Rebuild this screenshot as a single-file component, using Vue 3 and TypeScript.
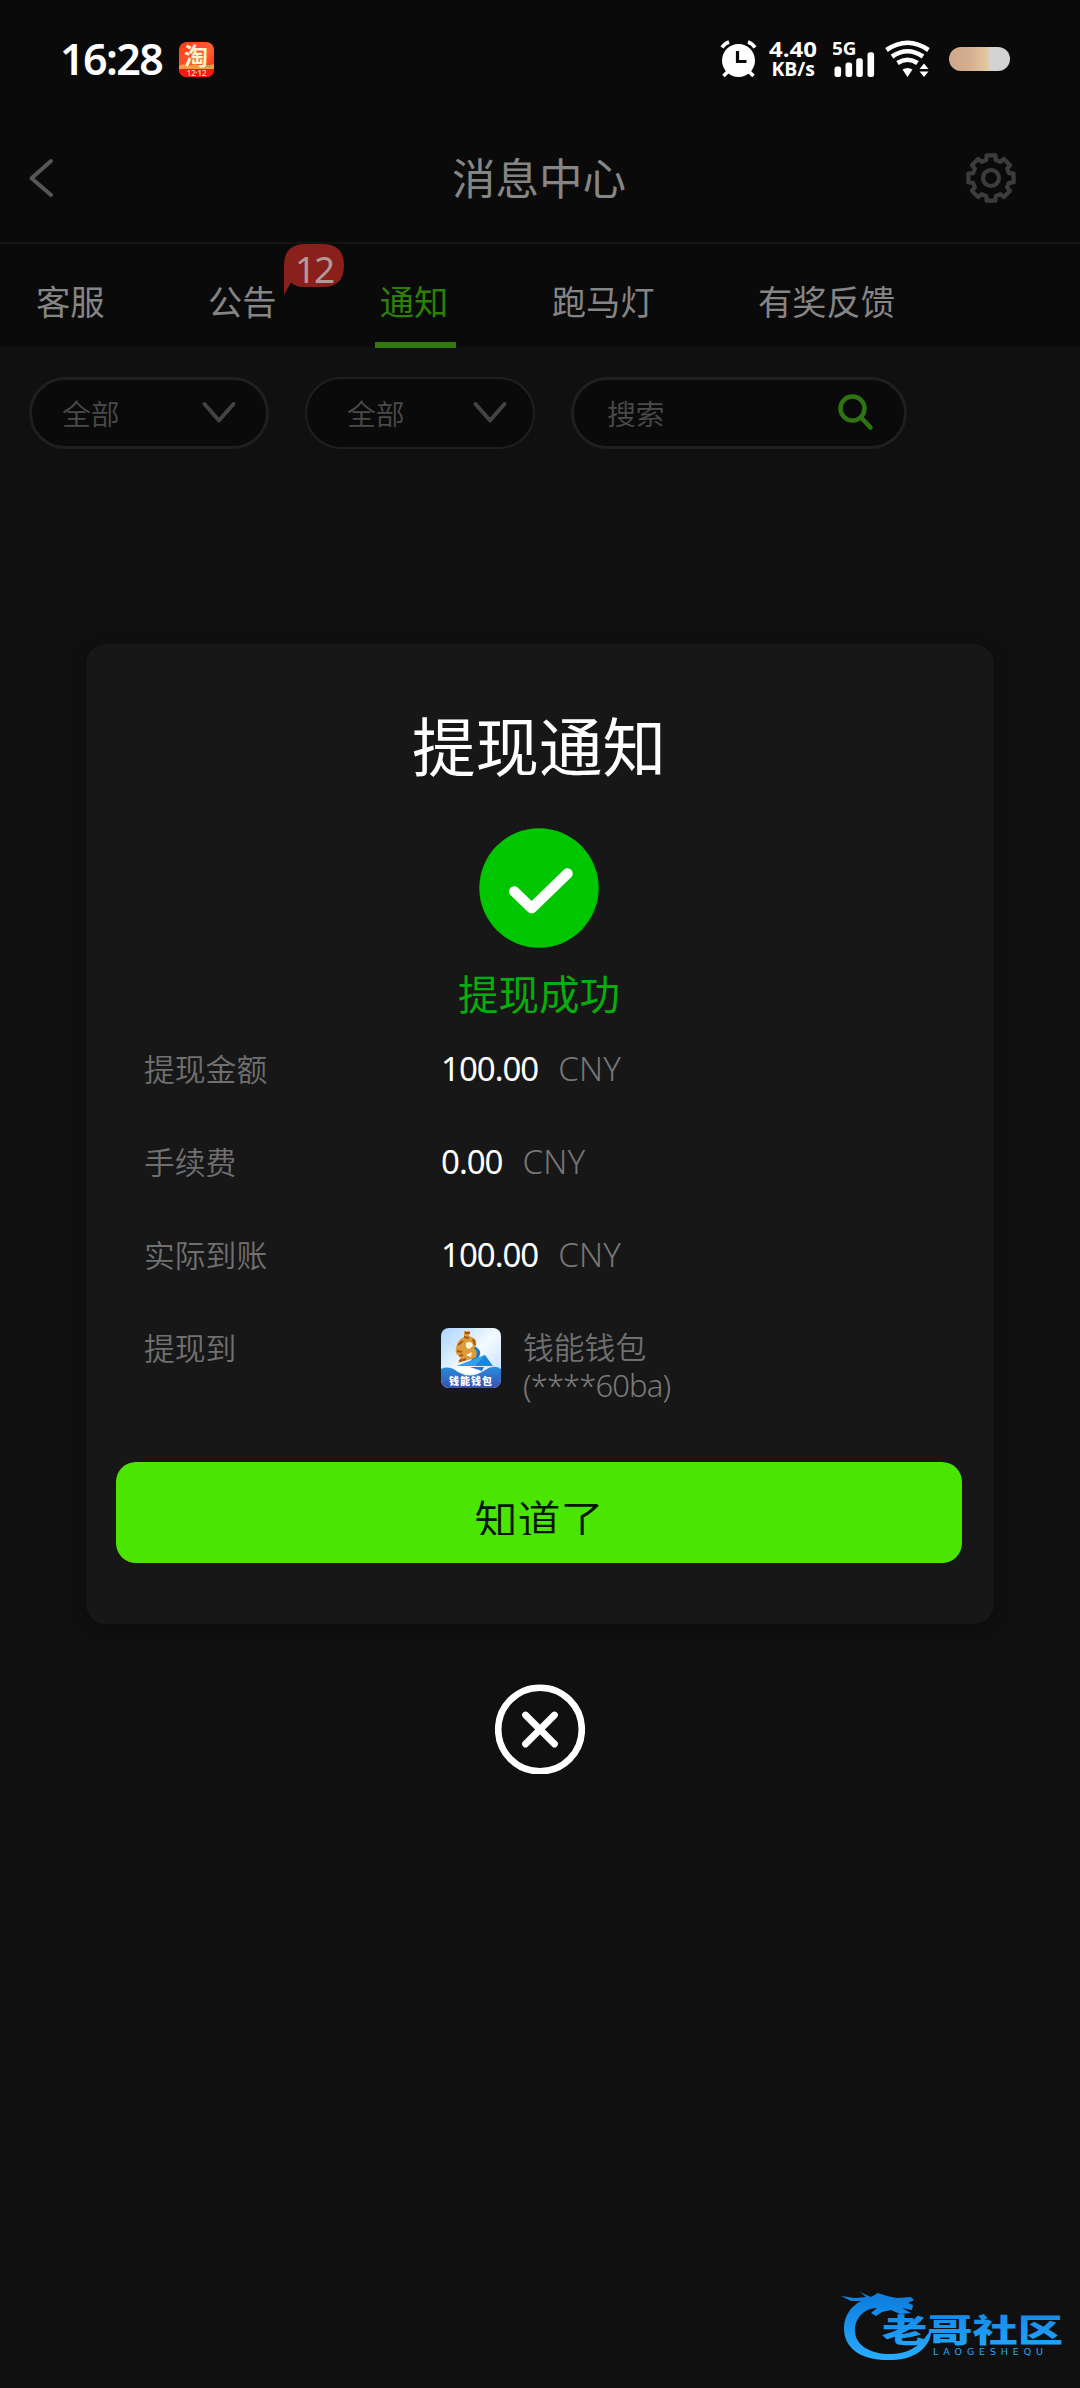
<script setup lang="ts">
interface Tab {
  label: string
  badge?: number
  active?: boolean
}

interface AmountRow {
  label: string
  value: string
}

const tabs: Tab[] = [
  { label: '客服' },
  { label: '公告', badge: 12 },
  { label: '通知', active: true },
  { label: '跑马灯' },
  { label: '有奖反馈' },
]

const rows: AmountRow[] = [
  { label: '提现金额', value: '100.00' },
  { label: '手续费', value: '0.00' },
  { label: '实际到账', value: '100.00' },
]

// Outline of an eight-toothed cog centred on the origin
function cogPath(): string {
  const steps: [number, number][] = [
    [-11, 23], [11, 23], [15, 18.6], [30, 18.6],
  ]
  const pts: string[] = []
  for (let i = 0; i < 8; i++) {
    for (const [deg, r] of steps) {
      const a = ((i * 45 + deg - 90) * Math.PI) / 180
      pts.push(`${(Math.cos(a) * r).toFixed(2)} ${(Math.sin(a) * r).toFixed(2)}`)
    }
  }
  return `M${pts.join('L')}Z`
}
const cog = cogPath()
</script>

<template>
  <div class="screen">
    <header class="top">
      <div class="status">
        <span class="clock">16:28</span>
        <svg class="app-icon" width="35" height="35" viewBox="0 0 35 35">
          <defs>
            <linearGradient id="tb" x1="0" y1="0" x2="1" y2="1">
              <stop offset="0" stop-color="#ff3a10" />
              <stop offset=".55" stop-color="#ff6030" />
              <stop offset="1" stop-color="#fb1c10" />
            </linearGradient>
          </defs>
          <rect width="35" height="35" rx="8" fill="url(#tb)" />
          <path d="M0 24Q4 20 8 25L16 22Q24 26 35 22V27H0Z" fill="#ff9a3c" />
          <path d="M20 24H33" stroke="#9fb060" stroke-width="2" />
          <path d="M0 27H35Q35 35 27 35H8Q0 35 0 27Z" fill="#f21a12" />
          <text x="5" y="22.500" font-size="24" font-weight="700" fill="#fff3d2" class="cjk-svg">淘</text>
          <text x="7.500" y="34" font-size="8.500" font-weight="600" fill="#ffc9a0" textLength="20" class="lat-svg">12·12</text>
        </svg>
        <div class="indicators">
          <svg width="38" height="38" viewBox="0 0 38 38">
            <circle cx="18.500" cy="20.500" r="16.500" fill="#fff" />
            <path d="M2 7.500Q4.500 3.500 9 2M28 2Q32.500 3.500 35 7.500" fill="none" stroke="#fff" stroke-width="3.600" />
            <path d="M7.500 32L3.500 36M29.500 32L33.500 36" stroke="#fff" stroke-width="3.600" />
            <path d="M17.500 11V21.500H26.500" fill="none" stroke="#0a0a0a" stroke-width="3.200" />
          </svg>
          <svg class="speed" width="50" height="38" viewBox="0 0 50 38">
            <text x="0" y="17" font-size="21.500" font-weight="700" textLength="48" lengthAdjust="spacingAndGlyphs" class="lat-svg">4.40</text>
            <text x="2.500" y="35.500" font-size="19" font-weight="700" textLength="43.500" lengthAdjust="spacingAndGlyphs" class="lat-svg">KB/s</text>
          </svg>
          <svg class="signal" width="43" height="38" viewBox="0 0 43 38" fill="#fff">
            <text x="-1" y="14.500" font-size="18.500" font-weight="700" textLength="24.500" lengthAdjust="spacingAndGlyphs" class="lat-svg">5G</text>
            <rect x="1.500" y="26.500" width="6.600" height="10.500" rx="2.500" />
            <rect x="12.500" y="22.500" width="6.600" height="14.500" rx="2.500" />
            <rect x="23.200" y="18.300" width="6.600" height="18.700" rx="2.500" />
            <rect x="34.500" y="12.300" width="6.600" height="24.700" rx="2.500" />
          </svg>
          <svg class="wifi" width="46" height="38" viewBox="0 0 46 38">
            <g fill="none" stroke="#fff" stroke-width="4.600">
              <path d="M1.500 10Q22.500 -4.500 43.500 10" />
              <path d="M7 16.500Q22.500 6 38 16.500" />
              <path d="M12.500 23Q22.500 16.500 32.500 23" />
            </g>
            <path d="M17.500 29.500Q22.500 26.500 27.500 29.500L22.500 37Z" fill="#fff" />
            <path d="M34.500 29L39 23.500L43.500 29ZM34.500 31.500H43.500L39 37Z" fill="#fff" />
          </svg>
          <i class="battery"></i>
        </div>
      </div>

      <div class="nav">
        <svg width="28" height="44" viewBox="0 0 28 44">
          <path d="M24 5L4.500 22.300L24 39" fill="none" stroke="#565656" stroke-width="4" stroke-linecap="round" stroke-linejoin="round" />
        </svg>
        <h1>消息中心</h1>
        <svg width="54" height="54" viewBox="-27 -27 54 54" fill="none" stroke="#3c3c3c" stroke-width="4.200" stroke-linejoin="round">
          <path :d="cog" />
          <circle r="8" />
        </svg>
      </div>

      <nav class="tabs">
        <div v-for="t in tabs" :key="t.label" class="tab" :class="{ active: t.active }">
          {{ t.label }}
          <span v-if="t.badge" class="badge">
            <svg width="60" height="51" viewBox="0 0 60 51">
              <path d="M0 21.500Q0 0 21.500 0H38.500Q60 0 60 21.500Q60 43 38.500 43H19Q12 43 7 38.500L0 51Z" fill="#89201c" />
            </svg>
            <b>{{ t.badge }}</b>
          </span>
        </div>
      </nav>
    </header>

    <section class="filters">
      <div class="pill first">
        <span>全部</span>
        <svg width="36" height="24" viewBox="0 0 36 24"><path d="M3.500 3L18 19.500L32.500 3" /></svg>
      </div>
      <div class="pill second">
        <span>全部</span>
        <svg width="36" height="24" viewBox="0 0 36 24"><path d="M3.500 3L18 19.500L32.500 3" /></svg>
      </div>
      <div class="pill search">
        <span>搜索</span>
        <svg width="38" height="38" viewBox="0 0 38 38" class="lens">
          <circle cx="15.500" cy="15.500" r="12" />
          <path d="M24 24.500L33.500 34.500" />
        </svg>
      </div>
    </section>

    <div class="overlay">
      <section class="dialog">
        <h2>提现通知</h2>
        <svg class="ok" width="120" height="120" viewBox="0 0 120 120">
          <circle cx="60" cy="60" r="59.700" fill="#00c600" />
          <path d="M35.300 63.500L52.700 80.300L88.500 45.500" fill="none" stroke="#fff" stroke-width="10.500" stroke-linecap="round" stroke-linejoin="round" />
        </svg>
        <p class="result">提现成功</p>

        <div v-for="r in rows" :key="r.label" class="row">
          <span class="label">{{ r.label }}</span>
          <span class="value">{{ r.value }}</span>
          <span class="unit">CNY</span>
        </div>

        <div class="row target">
          <span class="label">提现到</span>
          <svg class="wallet" width="60" height="60" viewBox="0 0 60 60">
            <defs>
              <linearGradient id="sky" x1="0" y1="0" x2="1" y2="1">
                <stop offset="0" stop-color="#a9d4ff" />
                <stop offset=".5" stop-color="#f4faff" />
                <stop offset="1" stop-color="#b7dbff" />
              </linearGradient>
              <linearGradient id="sea" x1="0" y1="0" x2="0" y2="1">
                <stop offset="0" stop-color="#278ddd" />
                <stop offset="1" stop-color="#3a51ae" />
              </linearGradient>
              <clipPath id="rr"><rect width="60" height="60" rx="8" /></clipPath>
            </defs>
            <g clip-path="url(#rr)">
              <rect width="60" height="60" fill="url(#sky)" />
              <path d="M33 18Q42 22 38 29L30 34Z" fill="#1479cf" />
              <path d="M44 27L52 38H16Z" fill="#1c86d6" />
              <path d="M16 38L44 27L34 38Z" fill="#2aa6e8" />
              <path d="M23 3L29 3L28 8Q37 10 35 18L33 20Q38 25 34 30L17 35L20 28Q13 27 15 20Q16 12 23 9Z" fill="#dc9c3c" />
              <path d="M24 5H29M23 9L28 10M17 17L22 13M16 23L21 24M32 11L34 17M18 33L25 31M18 28L22 27" stroke="#a8560f" stroke-width="2" />
              <path d="M25 15Q31 12 32 18L28 21Q24 20 25 15M25 27L31 24L30 29Z" fill="#fff7dc" />
              <path d="M0 41Q8 37 17 44Q30 52 44 42Q53 36 60 41V60H0Z" fill="url(#sea)" />
              <path d="M14 41Q30 37 45 41Q31 51 14 41Z" fill="#fff" />
              <path d="M29 39H43L41 43Z" fill="#1678d0" />
              <text x="8" y="57" font-size="10" font-weight="900" fill="#fff" textLength="43" class="cjk-svg">钱能钱包</text>
            </g>
          </svg>
          <div class="account">
            <div>钱能钱包</div>
            <div class="number">(****60ba)</div>
          </div>
        </div>

        <button class="confirm"><span>知道了</span></button>
      </section>

      <svg class="close" width="90" height="90" viewBox="0 0 90 90" fill="none" stroke="#fff">
        <circle cx="45" cy="45.500" r="41.800" stroke-width="6.600" />
        <path d="M30.500 31L59.500 60M59.500 31L30.500 60" stroke-width="6.800" stroke-linecap="round" />
      </svg>
    </div>

    <svg class="brand" width="230" height="100" viewBox="0 0 230 100">
      <defs>
        <linearGradient id="brand" gradientUnits="userSpaceOnUse" x1="0" y1="30" x2="0" y2="88">
          <stop offset="0" stop-color="#0f80e0" />
          <stop offset="1" stop-color="#28acff" />
        </linearGradient>
      </defs>
      <g fill="url(#brand)">
        <path d="M1 26L15 28L26 27L20 22L31 27L38 23L47 26L57 28L71 27L74 30L68 33L73 35L72 40L62 38L71 43L60 44L51 40L42 42L36 46L31 43L37 38C23 38 14 50 15 62C16 76 31 84 50 84C67 84 79 77 87 65L91 60C92 75 76 90 52 90C20 91 4 78 4 58C4 46 11 36 21 31L11 31Z" />
        <text x="42" y="71.500" font-size="32" font-weight="900" textLength="181" lengthAdjust="spacingAndGlyphs" class="cjk-svg">老哥社区</text>
        <text x="93" y="84.500" font-size="9.500" font-weight="400" textLength="110" class="wide-svg">LAOGESHEQU</text>
      </g>
    </svg>
  </div>
</template>

<style>
html,
body {
  margin: 0;
  background: #101010;
}
</style>

<style scoped>
.screen {
  position: relative;
  width: 1080px;
  height: 2388px;
  overflow: hidden;
  background: #101010;
  font-family: "Noto Sans CJK SC", sans-serif;
  white-space: nowrap;
}

svg {
  display: block;
  flex: none;
}

.cjk-svg {
  font-family: "Noto Sans CJK SC", sans-serif;
}

.lat-svg {
  font-family: "Open Sans", "Noto Sans", sans-serif;
}

.wide-svg {
  font-family: "DejaVu Sans", sans-serif;
}

.top {
  height: 347px;
  background: #0a0a0a;
}

.status {
  display: flex;
  align-items: center;
  height: 118px;
  padding: 0 70px 0 60px;
  box-sizing: border-box;
}

.clock {
  width: 119px;
  font: 600 43px/60px "Noto Sans", sans-serif;
  letter-spacing: -1.600px;
  color: #fff;
}

.indicators {
  display: flex;
  align-items: center;
  margin-left: auto;
}

.speed {
  margin-left: 11px;
  fill: #fff;
}

.signal {
  margin-left: 14px;
}

.wifi {
  margin-left: 9px;
}

.battery {
  width: 61px;
  height: 24px;
  margin-left: 18px;
  border-radius: 12px;
  background: linear-gradient(90deg, #cfa78c 0, #d4ae90 20px, #e6c79f 39px, #d3d3d3 40px);
}

.nav {
  display: flex;
  align-items: center;
  justify-content: space-between;
  height: 124px;
  padding: 0 62px 0 27px;
  border-bottom: 2px solid #131313;
}

.nav h1 {
  margin: -7px 0 0 59px;
  font-size: 43.500px;
  font-weight: 400;
  line-height: 60px;
  color: #858585;
}

.nav svg {
  margin-bottom: 4px;
}

.tabs {
  display: flex;
  gap: 103.300px;
  height: 103px;
  padding-left: 36px;
}

.tab {
  position: relative;
  font-size: 34.300px;
  line-height: 112px;
  color: #858585;
}

.tab.active {
  color: #2d7f08;
}

.tab.active::after {
  content: "";
  position: absolute;
  left: -5px;
  right: -8px;
  top: 98px;
  height: 6px;
  background: #2f7a0b;
}

.badge {
  position: absolute;
  left: 76px;
  top: 0;
  width: 60px;
  height: 51px;
}

.badge b {
  position: absolute;
  left: 0;
  top: 0;
  width: 60px;
  text-align: center;
  font: 400 37px/49px "Noto Sans", sans-serif;
  letter-spacing: -2px;
  color: #b29a99;
}

.filters {
  display: flex;
  padding: 30px 0 0 29px;
}

.pill {
  display: flex;
  align-items: center;
  justify-content: space-between;
  box-sizing: border-box;
  height: 72px;
  border: 3px solid #1f1f1f;
  border-radius: 36px;
  background: #0a0a0a;
  font-size: 28.800px;
  font-weight: 350;
  line-height: 60px;
  color: #4a4a4a;
}

.pill path {
  fill: none;
  stroke: #434343;
  stroke-width: 4;
  stroke-linecap: round;
  stroke-linejoin: round;
}

.first {
  width: 240px;
  padding: 0 29px 0 30px;
}

.second {
  width: 230px;
  margin-left: 36px;
  padding: 0 25px 0 40px;
  border-width: 2px;
}

.search {
  width: 336px;
  margin-left: 36px;
  padding: 0 29px 0 33px;
}

.search .lens {
  margin-bottom: 2px;
}

.search .lens circle,
.search .lens path {
  fill: none;
  stroke: #2f7413;
  stroke-width: 4.500;
}

.overlay {
  position: absolute;
  inset: 0;
  display: flex;
  flex-direction: column;
  align-items: center;
  padding-top: 644px;
}

.dialog {
  display: flex;
  flex-direction: column;
  align-items: center;
  box-sizing: border-box;
  width: 908px;
  height: 980px;
  padding: 59px 32px 0 30px;
  border-radius: 20px;
  background: #171717;
  box-shadow: 0 4px 18px rgba(0, 0, 0, 0.3);
}

.dialog h2 {
  margin: 0 0 45px;
  font-size: 63.500px;
  font-weight: 400;
  line-height: 80px;
  color: #fff;
}

.result {
  margin: 15px 0 0;
  font-size: 40.500px;
  line-height: 60px;
  color: #06ad0c;
}

.row {
  display: flex;
  align-self: stretch;
  height: 93px;
  padding-left: 28px;
  line-height: 93px;
  font-size: 30.800px;
  font-weight: 350;
  color: #707070;
}

.result + .row {
  margin-top: -2px;
}

.label {
  width: 297px;
}

.value,
.unit {
  font-family: "Noto Sans", sans-serif;
  font-size: 33px;
  padding-top: 1px;
}

.value {
  font-weight: 400;
  letter-spacing: -1px;
  color: #fff;
}

.unit {
  margin-left: 20px;
  font-weight: 300;
  letter-spacing: 0.200px;
  color: #767676;
}

.target {
  height: 162px;
}

.wallet {
  margin-top: 28px;
}

.account {
  margin: 27px 0 0 22px;
  line-height: 38px;
}

.number {
  padding-top: 1px;
  font-family: "Noto Sans", sans-serif;
  font-size: 31px;
  font-weight: 300;
  letter-spacing: -0.900px;
  color: #7a7a7a;
}

.confirm {
  display: flex;
  justify-content: center;
  width: 846px;
  height: 101px;
  padding: 31px 0 0;
  border: 0;
  border-radius: 20px;
  background: #4ae500;
}

.confirm span {
  height: 42px;
  overflow: hidden;
  font: 350 43px/50px "Noto Sans CJK SC", sans-serif;
  color: #071503;
}

.close {
  margin-top: 60px;
}

.brand {
  position: absolute;
  left: 840px;
  top: 2270px;
}
</style>
